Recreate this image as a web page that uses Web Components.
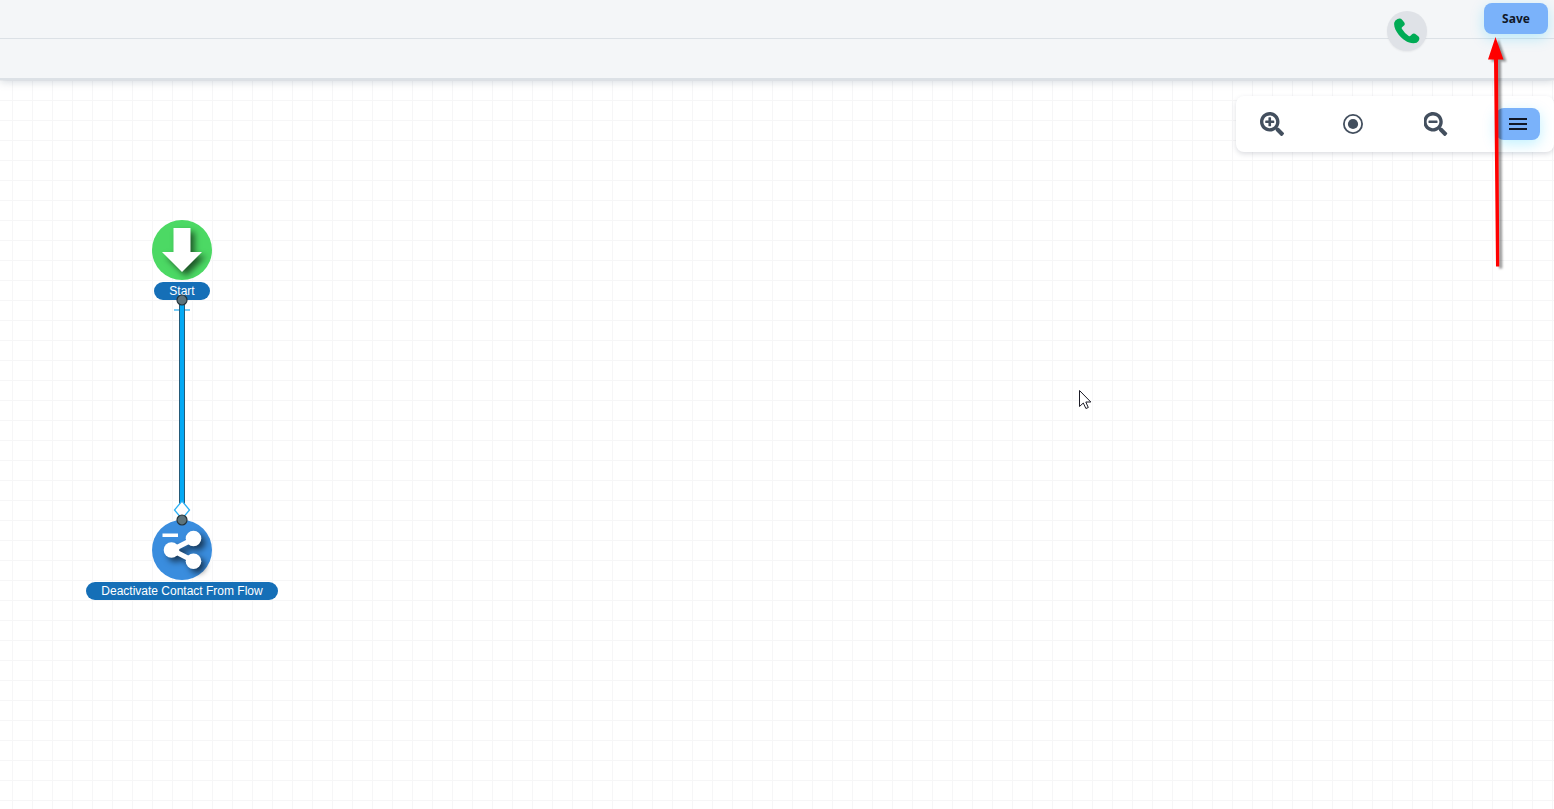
<!DOCTYPE html>
<html lang="en">
<head>
<meta charset="utf-8">
<title>Flow editor</title>
<style>
    html, body{
        height:100%;
        margin:0;
        overflow:hidden;
    }
    body{
        font-family:"Noto Sans", sans-serif;
        color:#111827;
    }
</style>
</head>
<body>
<flow-editor></flow-editor>

<script>
const makeTemplate = (html) => {
    const template = document.createElement('template');
    template.innerHTML = html;
    return template;
};

class BaseElement extends HTMLElement {
    constructor(){
        super();
        this.attachShadow({mode:'open'});
        this.shadowRoot.appendChild(this.constructor.template.content.cloneNode(true));
    }
}

// blue button used for save and for the menu
class PrimaryButton extends BaseElement {
    static template = makeTemplate(`
    <style>
        :host{
            display:inline-flex;
        }
        button{
            display:flex;
            align-items:center;
            justify-content:center;
            width:100%;
            padding:0;
            border:0;
            border-radius:8px;
            background:#7ab2fa;
            color:#111827;
            font:bold 12px/20px "Noto Sans", sans-serif;
            box-shadow:0 4px 14px #00c8ff40;
            cursor:pointer;
        }
    </style>
    <button type="button"><slot></slot></button>`);

    connectedCallback(){
        const label = this.getAttribute('label');
        if(label) this.shadowRoot.querySelector('button').setAttribute('aria-label', label);
    }
}
customElements.define('primary-button', PrimaryButton);

class IconButton extends BaseElement {
    static template = makeTemplate(`
    <style>
        :host{
            display:inline-flex;
        }
        button{
            display:flex;
            align-items:center;
            justify-content:center;
            width:44px;
            height:32px;
            padding:0;
            border:0;
            background:none;
            color:#434f5e;
            cursor:pointer;
        }
    </style>
    <button type="button"><slot></slot></button>`);

    connectedCallback(){
        this.shadowRoot.querySelector('button').setAttribute('aria-label', this.getAttribute('label'));
    }
}
customElements.define('icon-button', IconButton);

class CallButton extends BaseElement {
    static template = makeTemplate(`
    <style>
        :host{
            display:block;
        }
        button{
            display:flex;
            align-items:center;
            justify-content:center;
            width:40px;
            height:40px;
            padding:0;
            border:0;
            border-radius:50%;
            background:#dfe2e7;
            color:#00ab55;
            box-shadow:0 1px 2px #0000000f;
            cursor:pointer;
        }
    </style>
    <button type="button" aria-label="Call">
        <svg width="26" height="26" viewBox="0 0 26 26" fill="currentColor">
            <path d="M3.500 1Q5.500.2 7 .8Q8 1.200 10.300 4.500Q11.200 6 10.300 7.200L8 9.200Q7.300 10 8 11Q10.700 15.500 14.700 17.900Q15.700 18.500 16.500 17.700L18.300 15.900Q19.500 15 21 15.700L24.300 18.200Q25.600 19.500 25.300 21.200Q24.800 23.800 22.700 24.700C16 26.800 8.500 21.700 4.700 16.700C1.600 12.600-.5 8 .3 4.600Q.9 2.200 3.500 1Z"/>
        </svg>
    </button>`);
}
customElements.define('call-button', CallButton);

class TopBar extends BaseElement {
    static template = makeTemplate(`
    <style>
        :host{
            display:block;
            position:relative;
            z-index:1;
            background:#f4f6f8;
            border-bottom:2px solid #dce1e6;
            box-shadow:0 2px 8px #5b708340;
        }
        .row{
            display:flex;
            justify-content:flex-end;
            align-items:flex-start;
            box-sizing:border-box;
            height:39px;
            padding:3px 6px;
        }
        .row + .row{
            border-top:1px solid #dce1e6;
            margin-top:-1px;
            height:40px;
        }
        primary-button{
            position:relative;
            width:64px;
            height:31px;
        }
        call-button{
            position:absolute;
            top:11px;
            right:127px;
        }
    </style>
    <div class="row"><primary-button>Save</primary-button></div>
    <div class="row"></div>
    <call-button></call-button>`);
}
customElements.define('top-bar', TopBar);

class ZoomToolbar extends BaseElement {
    static template = makeTemplate(`
    <style>
        :host{
            display:flex;
            justify-content:space-between;
            box-sizing:border-box;
            width:318px;
            padding:12px 14px;
            background:#fff;
            border-radius:8px;
            box-shadow:0 2px 5px #3b425b2e;
        }
        primary-button{
            width:44px;
            height:32px;
        }
    </style>
    <icon-button label="Zoom in">
        <svg width="24" height="24" viewBox="0 0 512 512" fill="currentColor"><path d="M304 192v32c0 6.6-5.4 12-12 12h-56v56c0 6.6-5.4 12-12 12h-32c-6.6 0-12-5.4-12-12v-56h-56c-6.6 0-12-5.4-12-12v-32c0-6.6 5.4-12 12-12h56v-56c0-6.6 5.4-12 12-12h32c6.6 0 12 5.4 12 12v56h56c6.6 0 12 5.4 12 12zm201 284.7L476.7 505c-9.4 9.4-24.6 9.4-33.9 0L343 405.3c-4.5-4.5-7-10.6-7-17V372c-35.3 27.6-79.7 44-128 44C93.1 416 0 322.9 0 208S93.1 0 208 0s208 93.1 208 208c0 48.3-16.4 92.7-44 128h16.3c6.4 0 12.5 2.5 17 7l99.7 99.7c9.3 9.4 9.3 24.6 0 34zM344 208c0-75.2-60.8-136-136-136S72 132.8 72 208s60.8 136 136 136 136-60.8 136-136z"/></svg>
    </icon-button>
    <icon-button label="Reset zoom">
        <svg width="24" height="24" viewBox="0 0 24 24"><circle cx="11" cy="12" r="9.100" fill="none" stroke="currentColor" stroke-width="1.800"/><circle cx="11" cy="12" r="5.100" fill="currentColor"/></svg>
    </icon-button>
    <icon-button label="Zoom out">
        <svg width="24" height="24" viewBox="16 0 512 512" fill="currentColor"><path d="M304 192v32c0 6.600-5.400 12-12 12H124c-6.600 0-12-5.400-12-12v-32c0-6.600 5.400-12 12-12h168c6.600 0 12 5.400 12 12zm201 284.700L476.700 505c-9.400 9.400-24.600 9.400-33.900 0L343 405.300c-4.500-4.500-7-10.600-7-17V372c-35.300 27.600-79.700 44-128 44C93.100 416 0 322.900 0 208S93.100 0 208 0s208 93.100 208 208c0 48.300-16.400 92.700-44 128h16.300c6.400 0 12.500 2.500 17 7l99.700 99.700c9.300 9.400 9.300 24.600 0 34zM344 208c0-75.200-60.800-136-136-136S72 132.800 72 208s60.800 136 136 136 136-60.800 136-136z" /></svg>
    </icon-button>
    <primary-button label="Menu">
        <svg width="24" height="24" viewBox="0 0 24 24" fill="currentColor"><path d="M3 18h18v-2H3v2zm0-5h18v-2H3v2zm0-7v2h18V6H3z"/></svg>
    </primary-button>`);
}
customElements.define('zoom-toolbar', ZoomToolbar);

class FlowNode extends BaseElement {
    static template = makeTemplate(`
    <style>
        :host{
            display:flex;
            flex-direction:column;
            align-items:center;
            width:200px;
            gap:2px;
            color:#fff;
        }
        .label{
            padding:0 15px;
            border-radius:9px;
            background:#156fb7;
            font:12px/18px "Liberation Sans", Arial, sans-serif;
            white-space:nowrap;
        }
    </style>
    <slot name="icon"></slot>
    <div class="label"><slot></slot></div>`);
}
customElements.define('flow-node', FlowNode);

class FlowCanvas extends BaseElement {
    static template = makeTemplate(`
    <style>
        :host{
            display:block;
            position:relative;
            background-color:#fff;
            background-image:
                linear-gradient(to right, #f6f6f7 1px, transparent 1px),
                linear-gradient(to bottom, #f6f6f7 1px, transparent 1px);
            background-size:20px 20px;
            background-position:12px 0;
        }
        flow-node, .connector, .pointer{
            position:absolute;
        }
        flow-node{
            left:82px;
        }
        .start{
            top:140px;
        }
        .deactivate{
            top:440px;
        }
        .connector{
            left:172px;
            top:210px;
        }
        .pointer{
            left:1078px;
            top:309px;
        }
        zoom-toolbar{
            position:absolute;
            top:16px;
            right:0;
        }
        svg{
            display:block;
        }
        flow-node svg{
            overflow:visible;
        }
        .shape{
            filter:drop-shadow(4px 4px 3px #0009);
        }
    </style>
    <flow-node class="start">
        <svg slot="icon" width="60" height="60" viewBox="0 0 60 60">
            <circle cx="30" cy="30" r="30" fill="#4cd964"/>
            <path class="shape" d="M21.500 8h17v24h11.500L30 52 10 32h11.500z" fill="#fff"/>
        </svg>Start</flow-node>
    <flow-node class="deactivate">
        <svg slot="icon" width="60" height="60" viewBox="0 0 60 60">
            <circle cx="30" cy="30" r="30" fill="#3a8dde"/>
            <path d="M10.500 13.500h15.500v3.500h-15.500z" fill="#fff"/>
            <g class="shape" fill="#fff">
                <path d="M41.500 19 20 30l21.500 11" fill="none" stroke="#fff" stroke-width="5"/>
                <circle cx="41.500" cy="18.500" r="7.800"/>
                <circle cx="19.500" cy="30" r="7.800"/>
                <circle cx="41.500" cy="41.200" r="7.800"/>
            </g>
        </svg>Deactivate Contact From Flow</flow-node>

    <svg class="connector" width="20" height="240" viewBox="0 0 20 240">
        <path d="M10 10v204" stroke="#245a78" stroke-width="6"/>
        <path d="M10 10v204" stroke="#03a9f4" stroke-width="4"/>
        <path d="M2 20h5M13 20h5" stroke="#78cdf8" stroke-width="2"/>
        <path d="M10 211 17.500 220 10 229 2.500 220z" fill="#fff" stroke="#2bb1f5" stroke-width="1.300"/>
        <circle cx="10" cy="10" r="5" fill="#5d747c" stroke="#26343a" stroke-width="1.200"/>
        <circle cx="10" cy="230" r="5" fill="#5d747c" stroke="#26343a" stroke-width="1.200"/>
    </svg>

    <svg class="pointer" width="14" height="22" viewBox="0 0 14 22">
        <path d="M1.500 1.500v16l3.800-3.500 2.600 5.500 2.400-1-2.500-5.500h5z" fill="#fff" stroke="#1b1b26"/>
    </svg>

    <zoom-toolbar></zoom-toolbar>`);
}
customElements.define('flow-canvas', FlowCanvas);

class FlowEditor extends BaseElement {
    static template = makeTemplate(`
    <style>
        :host{
            display:flex;
            flex-direction:column;
            position:relative;
            height:100vh;
            overflow:hidden;
        }
        flow-canvas{
            flex:1;
        }
        .arrow{
            position:absolute;
            z-index:2;
            top:36px;
            right:42px;
            pointer-events:none;
            overflow:visible;
            filter:drop-shadow(3px 2px 1px #0006);
        }
    </style>
    <top-bar></top-bar>
    <flow-canvas></flow-canvas>
    <!-- points at the save button -->
    <svg class="arrow" width="26" height="232" viewBox="0 0 26 232">
        <path d="M9.500 1 2 23.500H8L10 230.500H13.300L12 23.500H17.500z" fill="#f00"/>
    </svg>`);
}
customElements.define('flow-editor', FlowEditor);
</script>
</body>
</html>
